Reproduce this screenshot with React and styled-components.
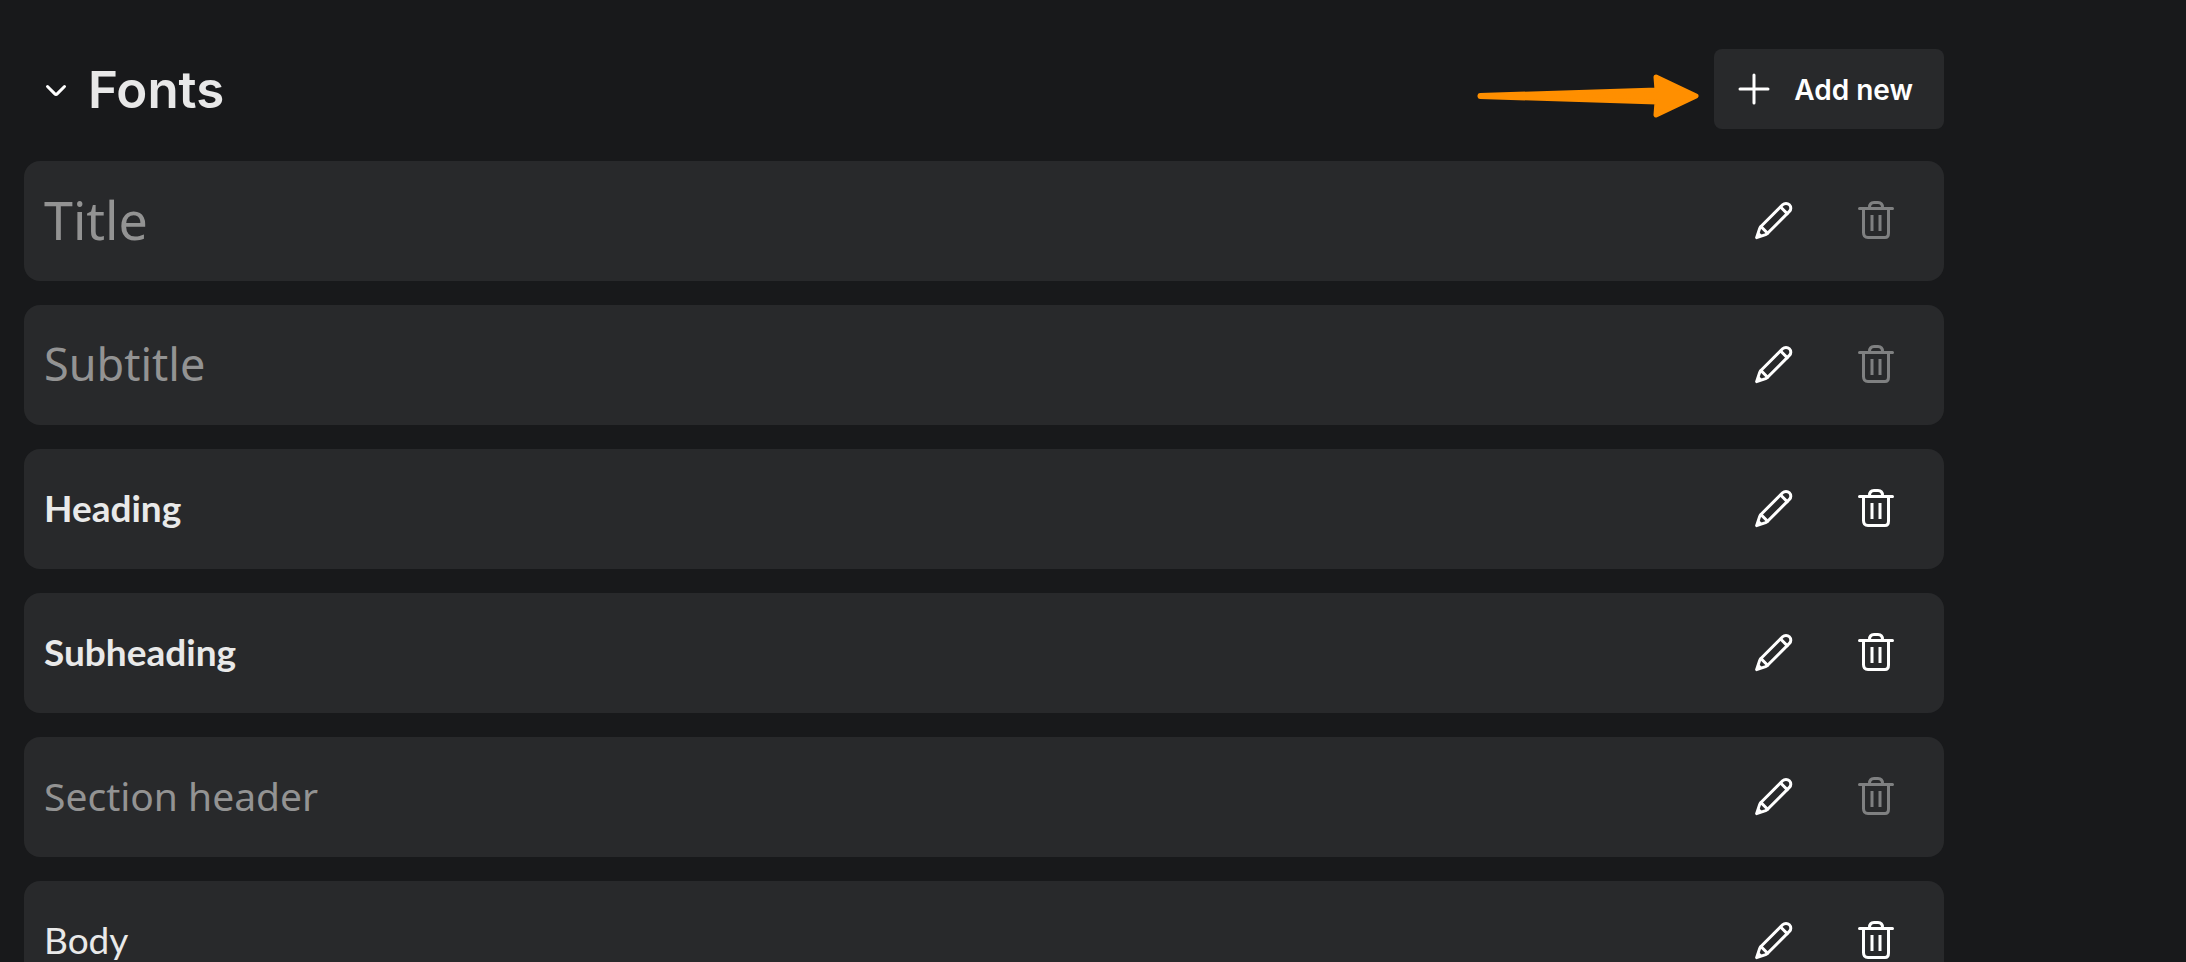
import React from "react";
import styled, { createGlobalStyle } from "styled-components";

const GlobalStyle = createGlobalStyle`
  *, *::before, *::after { box-sizing: border-box; }
  html, body { height: 100%; margin: 0; }
  body { background: #18191b; overflow: hidden; font-family: "Noto Sans", sans-serif; }
`;

const Page = styled.main`
  padding: 49px 242px 0 24px;
`;

const Header = styled.header`
  display: flex;
  align-items: center;
  margin-bottom: 32px;
`;

const Toggle = styled.button`
  display: flex;
  align-items: center;
  justify-content: center;
  width: 32px;
  height: 48px;
  margin-left: 16px;
  padding: 0;
  border: 0;
  background: none;
  color: #fff;
  cursor: pointer;
`;

const SectionTitle = styled.h2`
  flex: 1;
  margin: 0 0 0 16px;
  padding-top: 2px;
  color: #e8e8e8;
  font-family: Inter, sans-serif;
  font-size: 51px;
  font-weight: 600;
  line-height: 64px;
`;

const Arrow = styled.svg`
  flex: none;
  width: 224px;
  height: 48px;
  margin: 14px 14px 0 0;
  fill: #ff8f00;
  stroke: #ff8f00;
`;

const AddButton = styled.button`
  display: flex;
  align-items: center;
  gap: 16px;
  height: 80px;
  padding: 0 31px 0 16px;
  border: 0;
  border-radius: 8px;
  background: #28292b;
  color: #fff;
  font: 600 28px/40px Inter, sans-serif;
  white-space: nowrap;
  cursor: pointer;
`;

const AddLabel = styled.span`
  padding-top: 2px;
`;

const StyleList = styled.ul`
  display: flex;
  flex-direction: column;
  gap: 24px;
  margin: 0;
  padding: 0;
  list-style: none;
`;

const StyleRow = styled.li`
  display: flex;
  align-items: center;
  gap: 22px;
  height: 120px;
  padding: 0 28px 0 20px;
  border-radius: 16px;
  background: #28292b;
`;

const StyleName = styled.span`
  flex: 1;
  padding-bottom: 2px;
  color: ${(p) => (p.$set ? "#e9e9e9" : "#939393")};
  font-family: ${(p) => (p.$set ? "Lato" : '"Noto Sans"')}, sans-serif;
  font-size: ${(p) => p.$size}px;
  font-weight: ${(p) => (p.$bold ? 700 : 400)};
  line-height: 64px;
`;

const IconButton = styled.button`
  display: flex;
  align-items: center;
  justify-content: center;
  width: 80px;
  height: 80px;
  padding: 0;
  border: 0;
  border-radius: 8px;
  background: none;
  color: #fff;
  cursor: pointer;

  &:disabled {
    color: #7f8081;
    cursor: default;
  }
`;

const Icon = styled.svg`
  flex: none;
  width: 48px;
  height: 48px;
  fill: none;
  stroke: currentColor;
  stroke-width: 3;
  stroke-linecap: round;
  stroke-linejoin: round;
`;

const ChevronIcon = () => (
  <Icon viewBox="0 0 48 48" aria-hidden="true">
    <path d="M15.5 21.5 22.6 28.6Q24 30 25.4 28.6L32.5 21.5" />
  </Icon>
);

const PlusIcon = () => (
  <Icon viewBox="0 0 48 48" aria-hidden="true">
    <path d="M24 10v28M10 24h28" />
  </Icon>
);

const PencilIcon = () => (
  <Icon viewBox="0 0 48 48" aria-hidden="true">
    <path d="M6.6 40.6 9.6 31.6Q10 30.4 10.9 29.5L32.6 7.8Q34 6.4 36 6.4A4.8 4.8 0 0 1 40.8 11.2Q40.8 13 39.4 14.4L17.6 36.2Q16.7 37.1 15.6 37.6Z" />
    <path d="M11 29.6 17.6 36.2M30.6 10 37.2 16.6" />
    <path d="M6 41.4 8.4 34.6 12.6 38.8Z" fill="currentColor" stroke="none" />
  </Icon>
);

const TrashIcon = () => (
  <Icon viewBox="0 0 48 48" aria-hidden="true">
    <path d="M7.5 11.5H40.5M17.5 11V10.5Q17.5 5.5 22 5.5H26Q30.5 5.5 30.5 10.5V11M11.5 12V35.5Q11.5 40.5 16 40.5H33Q36.5 40.5 36.5 36V12" />
    <path d="M20 18V34M28 18V34" strokeLinecap="butt" />
  </Icon>
);

const textStyles = [
  { name: "Title", size: 52 },
  { name: "Subtitle", size: 45 },
  { name: "Heading", size: 37, set: true, bold: true },
  { name: "Subheading", size: 37, set: true, bold: true },
  { name: "Section header", size: 39 },
  { name: "Body", size: 37, set: true },
];

export default function App() {
  return (
    <>
      <GlobalStyle />
      <Page>
        <Header>
          <Toggle type="button" aria-label="Collapse fonts" aria-expanded="true">
            <ChevronIcon />
          </Toggle>
          <SectionTitle>Fonts</SectionTitle>
          <Arrow viewBox="0 0 224 48" aria-hidden="true">
            <path
              d="M4 23.5 181 18 180 5 220 24 180 43 181 30 4 24.5Z"
              strokeWidth="5"
              strokeLinejoin="round"
            />
          </Arrow>
          <AddButton type="button">
            <PlusIcon />
            <AddLabel>Add new</AddLabel>
          </AddButton>
        </Header>
        <StyleList>
          {textStyles.map(({ name, size, set, bold }) => (
            <StyleRow key={name}>
              <StyleName $size={size} $set={set} $bold={bold}>
                {name}
              </StyleName>
              <IconButton type="button" aria-label={`Edit ${name}`}>
                <PencilIcon />
              </IconButton>
              <IconButton type="button" aria-label={`Delete ${name}`} disabled={!set}>
                <TrashIcon />
              </IconButton>
            </StyleRow>
          ))}
        </StyleList>
      </Page>
    </>
  );
}
